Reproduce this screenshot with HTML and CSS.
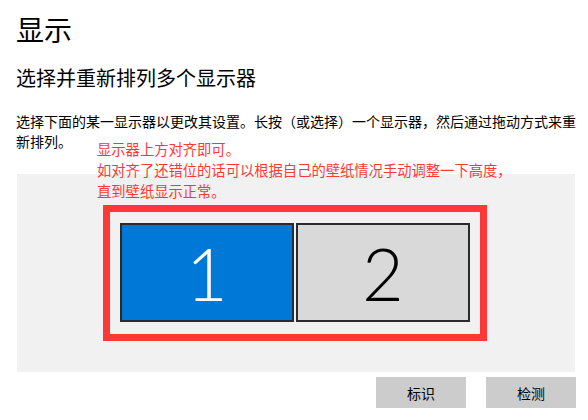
FILE: index.html
```html
<!DOCTYPE html>
<html lang="zh-CN">
<head>
<meta charset="utf-8">
<link rel="stylesheet" href="styles.css">
</head>
<body>
<main class="page">
  <h1 class="title">显示</h1>
  <h2 class="subtitle">选择并重新排列多个显示器</h2>
  <p class="desc">选择下面的某一显示器以更改其设置。长按（或选择）一个显示器，然后通过拖动方式来重新排列。</p>
  <div class="note">显示器上方对齐即可。<br>如对齐了还错位的话可以根据自己的壁纸情况手动调整一下高度，<br>直到壁纸显示正常。</div>
  <section class="panel">
    <div class="highlight">
      <div class="monitor monitor-active">1</div>
      <div class="monitor">2</div>
    </div>
  </section>
  <div class="actions">
    <button class="btn">标识</button>
    <button class="btn">检测</button>
  </div>
</main>
</body>
</html>
```
FILE: styles.css
```css
html, body {
  margin: 0;
  padding: 0;
  background: #ffffff;
}
body {
  font-family: "Noto Sans CJK SC", "Noto Sans", sans-serif;
  color: #000;
}
.page {
  position: relative;
  padding: 0 0 0 16px;
}
.title {
  margin: 0;
  padding-top: 9px;
  font-size: 28px;
  font-weight: 400;
  line-height: 40px;
}
.subtitle {
  margin: 15px 0 0 0;
  font-size: 20px;
  font-weight: 400;
  line-height: 28px;
}
.desc {
  margin: 19px 0 0 0;
  width: 566px;
  font-size: 14px;
  line-height: 20px;
}
.note {
  position: absolute;
  left: 97px;
  top: 138px;
  color: #fe3737;
  font-size: 14.3px;
  line-height: 21px;
}
.panel {
  margin: 23px 0 0 1px;
  width: 558px;
  height: 198px;
  background: #f1f1f1;
  box-sizing: border-box;
  padding: 31px 0 0 86px;
}
.highlight {
  display: flex;
  gap: 2px;
  width: 384px;
  box-sizing: border-box;
  border: 7px solid #fe3737;
  padding: 11px 10px 12px 10px;
}
.monitor {
  width: 174px;
  height: 99px;
  box-sizing: border-box;
  border: 2px solid #2b2b2b;
  background: #d9d9d9;
  display: flex;
  align-items: center;
  justify-content: center;
  font-family: "Lato", "Open Sans", sans-serif;
  font-weight: 300;
  font-size: 72px;
  color: #000;
}
.monitor-active {
  background: #0078d7;
  color: #fff;
}
.actions {
  display: flex;
  justify-content: flex-end;
  gap: 20px;
  width: 560px;
  margin-top: 5px;
}
.btn {
  width: 90px;
  height: 31px;
  border: none;
  background: #cccccc;
  font-family: "Noto Sans CJK SC", sans-serif;
  font-size: 14px;
  color: #000;
  padding: 0;
}
```
